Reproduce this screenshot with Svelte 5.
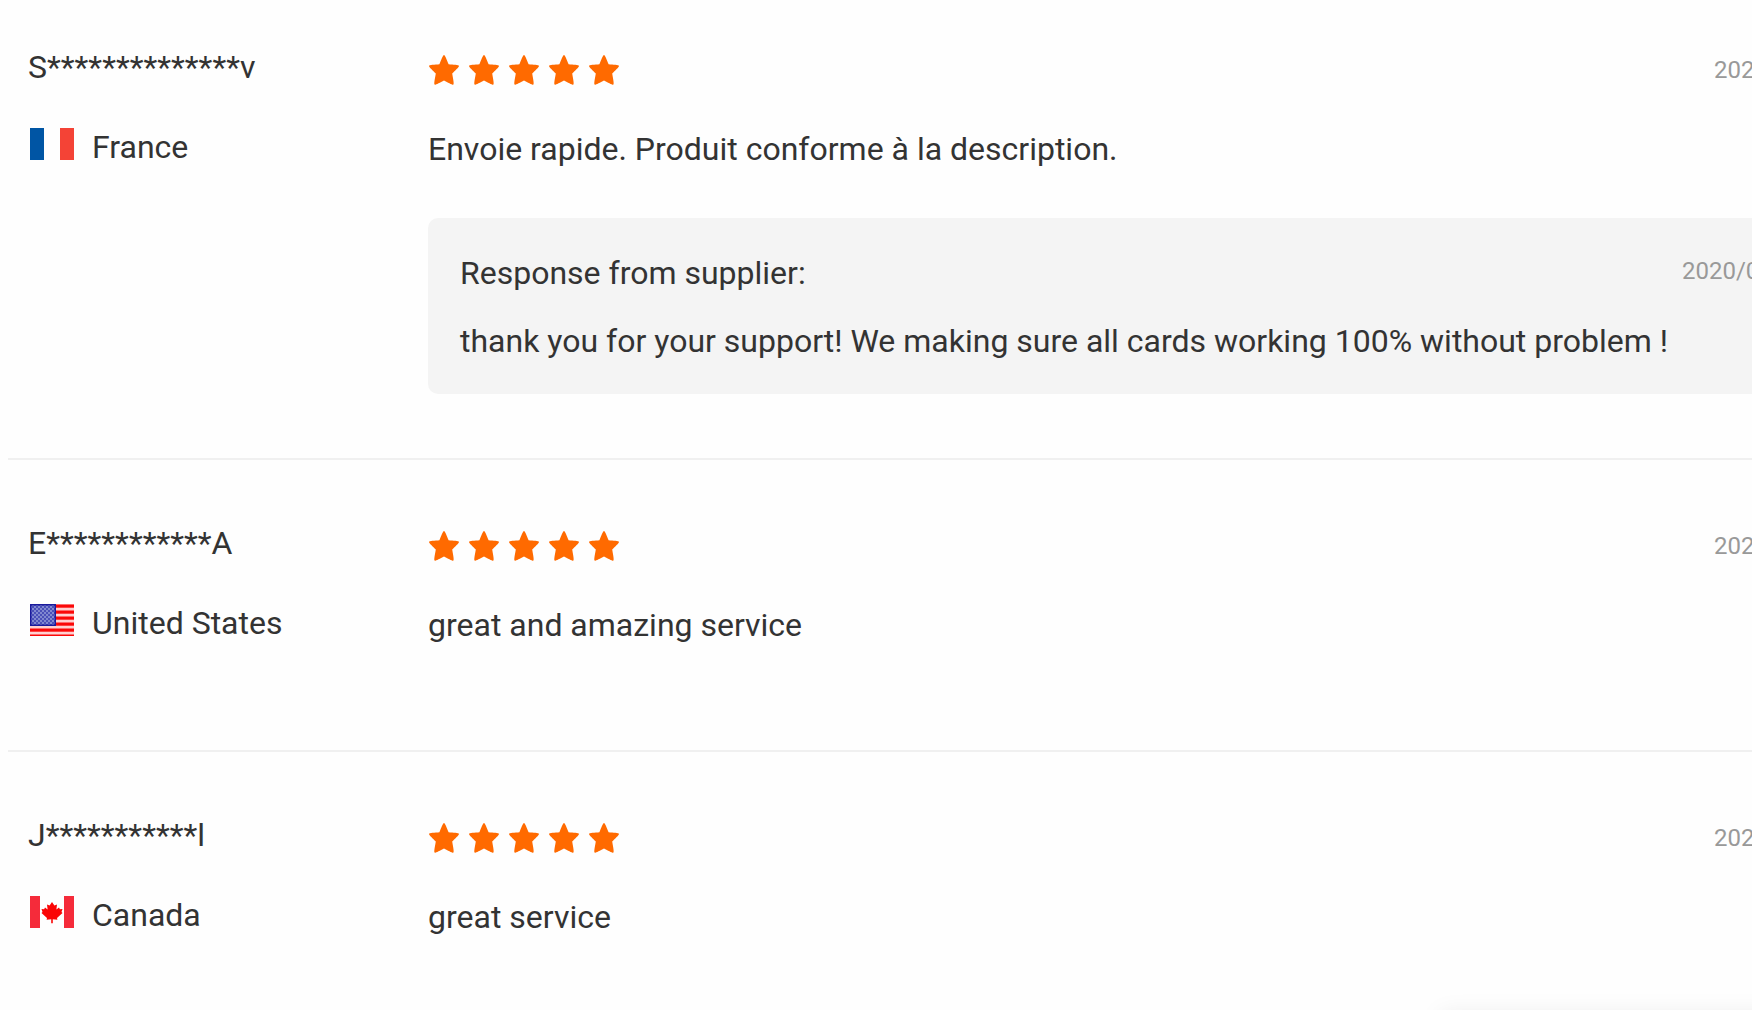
<script>
  const reviews = [
    {
      name: 'S**************v',
      country: 'France',
      flag: 'fr',
      rating: 5,
      date: '202',
      comment: 'Envoie rapide. Produit conforme à la description.',
      response: {
        date: '2020/0',
        text: 'thank you for your support! We making sure all cards working 100% without problem !',
      },
    },
    {
      name: 'E************A',
      country: 'United States',
      flag: 'us',
      rating: 5,
      date: '202',
      comment: 'great and amazing service',
    },
    {
      name: 'J***********l',
      country: 'Canada',
      flag: 'ca',
      rating: 5,
      date: '202',
      comment: 'great service',
    },
  ];
</script>

<main class="reviews">
  {#each reviews as review}
    <article class="review">
      <div class="buyer">
        <div class="name">{review.name}</div>
        <div class="country">
          <svg class="flag" viewBox="0 0 48 32" aria-hidden="true">
            {#if review.flag === 'fr'}
              <rect x="2" width="14" height="32" fill="#0055a4" />
              <rect x="32" width="14" height="32" fill="#f44336" />
            {:else if review.flag === 'us'}
              <defs>
                <pattern id="stars" width="4" height="4" patternUnits="userSpaceOnUse">
                  <rect width="4" height="4" fill="#4a50b8" />
                  <rect width="2" height="2" fill="#8088d0" />
                  <rect x="2" y="2" width="2" height="2" fill="#8088d0" />
                </pattern>
              </defs>
              <rect x="2" width="44" height="33" fill="#ffd0d0" />
              {#each [0, 6, 12, 18, 24, 30] as y}
                <rect x="2" y={y + 0.5} width="44" height="3.2" fill="#fb0808" />
              {/each}
              <rect x="2" width="26" height="22" fill="#1a1a9c" />
              <rect x="3.5" y="1.5" width="23" height="19" fill="url(#stars)" />
            {:else}
              <rect x="2" width="10" height="32" fill="#f52b3a" />
              <rect x="36" width="10" height="32" fill="#f52b3a" />
              <path
                fill="#fa0505"
                d="M24 6l2.4 3.6 2.6-1-.6 5 2.6-2 .9 1.6 2.6-.2-1 3 1 1-5.5 5 .4 1.8-4.6-.5v4h-1.6v-4l-4.6.5.4-1.8-5.5-5 1-1-1-3 2.6.2.9-1.6 2.6 2-.6-5 2.6 1z"
              />
            {/if}
          </svg>
          <span>{review.country}</span>
        </div>
      </div>

      <div class="content">
        <div class="top">
          <div class="rating" role="img" aria-label="{review.rating} stars">
            {#each Array(review.rating) as _}
              <svg class="star" viewBox="0 0 32 32">
                <path
                  d="M16 1C17 1 18.6 5.4 20.6 10.2C25 10.7 31 10.6 31 12C31 13.2 27 16.6 24.2 19.6C24.8 23.6 26.3 30 25.4 30.6C24.4 31 20 28.4 16 26.4C12 28.4 7.6 31 6.6 30.6C5.7 30 7.2 23.6 7.8 19.6C5 16.6 1 13.2 1 12C1 10.6 7 10.7 11.4 10.2C13.4 5.4 15 1 16 1Z"
                />
              </svg>
            {/each}
          </div>
          <time class="date">{review.date}</time>
        </div>
        <p class="comment">{review.comment}</p>

        {#if review.response}
          <div class="response">
            <div class="response-head">
              <span>Response from supplier:</span>
              <time class="response-date">{review.response.date}</time>
            </div>
            <p class="response-text">{review.response.text}</p>
          </div>
        {/if}
      </div>
    </article>
  {/each}
</main>
<div class="floating-panel"></div>

<style>
  :global(body) {
    background: #fefefe;
    overflow: hidden;
  }

  .reviews {
    color: #333;
    font-family: Roboto, Arial, sans-serif;
    font-size: 32px;
    line-height: 38px;
  }

  .review {
    display: grid;
    grid-template-columns: 400px minmax(0, 1fr);
    margin-left: 8px;
    padding: 64px 0 64px 20px;
    border-bottom: 2px solid #f0f0f0;
  }

  .review:first-child {
    padding-top: 48px;
  }

  .review:last-child {
    border-bottom: none;
  }

  .country {
    display: flex;
    align-items: flex-start;
    gap: 16px;
    margin-top: 42px;
  }

  .flag {
    width: 48px;
    height: 32px;
  }

  .top {
    display: flex;
    justify-content: space-between;
    height: 38px;
  }

  .rating {
    display: flex;
    gap: 8px;
    padding-top: 6px;
  }

  .star {
    width: 32px;
    height: 32px;
    fill: #ff6a00;
  }

  .date,
  .response-date {
    color: #999;
    font-size: 24px;
    white-space: nowrap;
  }

  /* dates run past the right edge */
  .date {
    width: 38px;
    line-height: 44px;
  }

  .response-date {
    width: 70px;
    line-height: 34px;
  }

  .comment {
    min-height: 86px;
    margin: 38px 0 0;
    line-height: 50px;
  }

  .response {
    margin-top: 8px;
    padding: 36px 0 34px 32px;
    border-radius: 10px 0 0 10px;
    background: #f4f4f4;
  }

  .response-head {
    display: flex;
    justify-content: space-between;
  }

  .response-text {
    margin: 30px 0 0;
  }

  .floating-panel {
    position: fixed;
    right: -40px;
    bottom: -60px;
    width: 352px;
    height: 56px;
    box-shadow: 0 0 24px rgba(0, 0, 0, 0.08);
  }
</style>
